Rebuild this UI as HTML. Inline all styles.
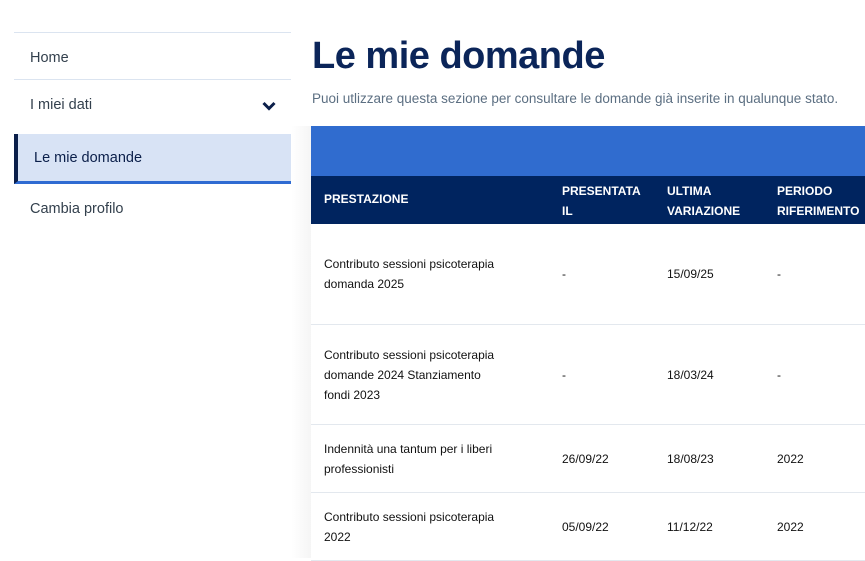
<!DOCTYPE html>
<html><head><meta charset="utf-8"><style>
*{margin:0;padding:0;box-sizing:border-box}
body{width:865px;height:558px;overflow:hidden;background:#fff;font-family:"Liberation Sans",sans-serif;color:#1a1a1a;position:relative}
.side{position:absolute;left:14px;top:32px;width:277px;border-top:1px solid #dbe4f0}
.it{height:47px;line-height:50px;padding-left:16px;font-size:14.5px;color:#33404d;border-bottom:1px solid #dbe4f0;position:relative}
.it.nb{border-bottom:none}
.act{height:50px;line-height:48px;background:#d8e3f5;border-left:4px solid #0b1f4a;border-bottom:3px solid #2f6bd2;padding-left:16px;font-size:14.5px;color:#0b1f4a;margin-top:7px}
h1{position:absolute;left:312px;top:35px;font-size:38px;font-weight:bold;color:#0b2559;letter-spacing:-0.5px}
.sub{position:absolute;left:312px;top:91px;font-size:13.5px;color:#5c6f82}
.band{position:absolute;left:311px;top:126px;width:554px;height:50px;background:#306ccf}
.hd{position:absolute;left:311px;top:176px;width:554px;height:48px;background:#00245f;color:#fff;font-size:12px;font-weight:bold}
.c{position:absolute}
.row{position:absolute;left:311px;width:554px;border-bottom:1px solid #e3e8ee;font-size:12px;color:#111;line-height:20px}
.row .c{top:50%;transform:translateY(-50%)}
.shadow{position:absolute;left:291px;top:126px;width:20px;height:432px;background:linear-gradient(to right,rgba(0,0,0,0),rgba(0,0,0,0.04))}
</style></head><body>
<div class="side">
<div class="it">Home</div>
<div class="it nb">I miei dati<svg style="position:absolute;left:248px;top:21px" width="14" height="10" viewBox="0 0 14 10"><path d="M1.5 2 L7 7.5 L12.5 2" stroke="#0b1f4a" stroke-width="3" fill="none"/></svg></div>
<div class="act">Le mie domande</div>
<div class="it nb" style="height:50px;line-height:50px">Cambia profilo</div>
</div>
<div class="shadow"></div>
<h1>Le mie domande</h1>
<div class="sub">Puoi utlizzare questa sezione per consultare le domande già inserite in qualunque stato.</div>
<div class="band"></div>
<div class="hd">
<div class="c" style="left:13px;top:16px">PRESTAZIONE</div>
<div class="c" style="left:251px;top:5px;line-height:20px">PRESENTATA<br>IL</div>
<div class="c" style="left:356px;top:5px;line-height:20px">ULTIMA<br>VARIAZIONE</div>
<div class="c" style="left:466px;top:5px;line-height:20px">PERIODO<br>RIFERIMENTO</div>
</div>
<div class="row" style="top:224px;height:101px">
<div class="c" style="left:13px">Contributo sessioni psicoterapia<br>domanda 2025</div>
<div class="c" style="left:251px">-</div><div class="c" style="left:356px">15/09/25</div><div class="c" style="left:466px">-</div></div>
<div class="row" style="top:325px;height:100px">
<div class="c" style="left:13px">Contributo sessioni psicoterapia<br>domande 2024 Stanziamento<br>fondi 2023</div>
<div class="c" style="left:251px">-</div><div class="c" style="left:356px">18/03/24</div><div class="c" style="left:466px">-</div></div>
<div class="row" style="top:425px;height:68px">
<div class="c" style="left:13px">Indennità una tantum per i liberi<br>professionisti</div>
<div class="c" style="left:251px">26/09/22</div><div class="c" style="left:356px">18/08/23</div><div class="c" style="left:466px">2022</div></div>
<div class="row" style="top:493px;height:68px">
<div class="c" style="left:13px">Contributo sessioni psicoterapia<br>2022</div>
<div class="c" style="left:251px">05/09/22</div><div class="c" style="left:356px">11/12/22</div><div class="c" style="left:466px">2022</div></div>
</body></html>
